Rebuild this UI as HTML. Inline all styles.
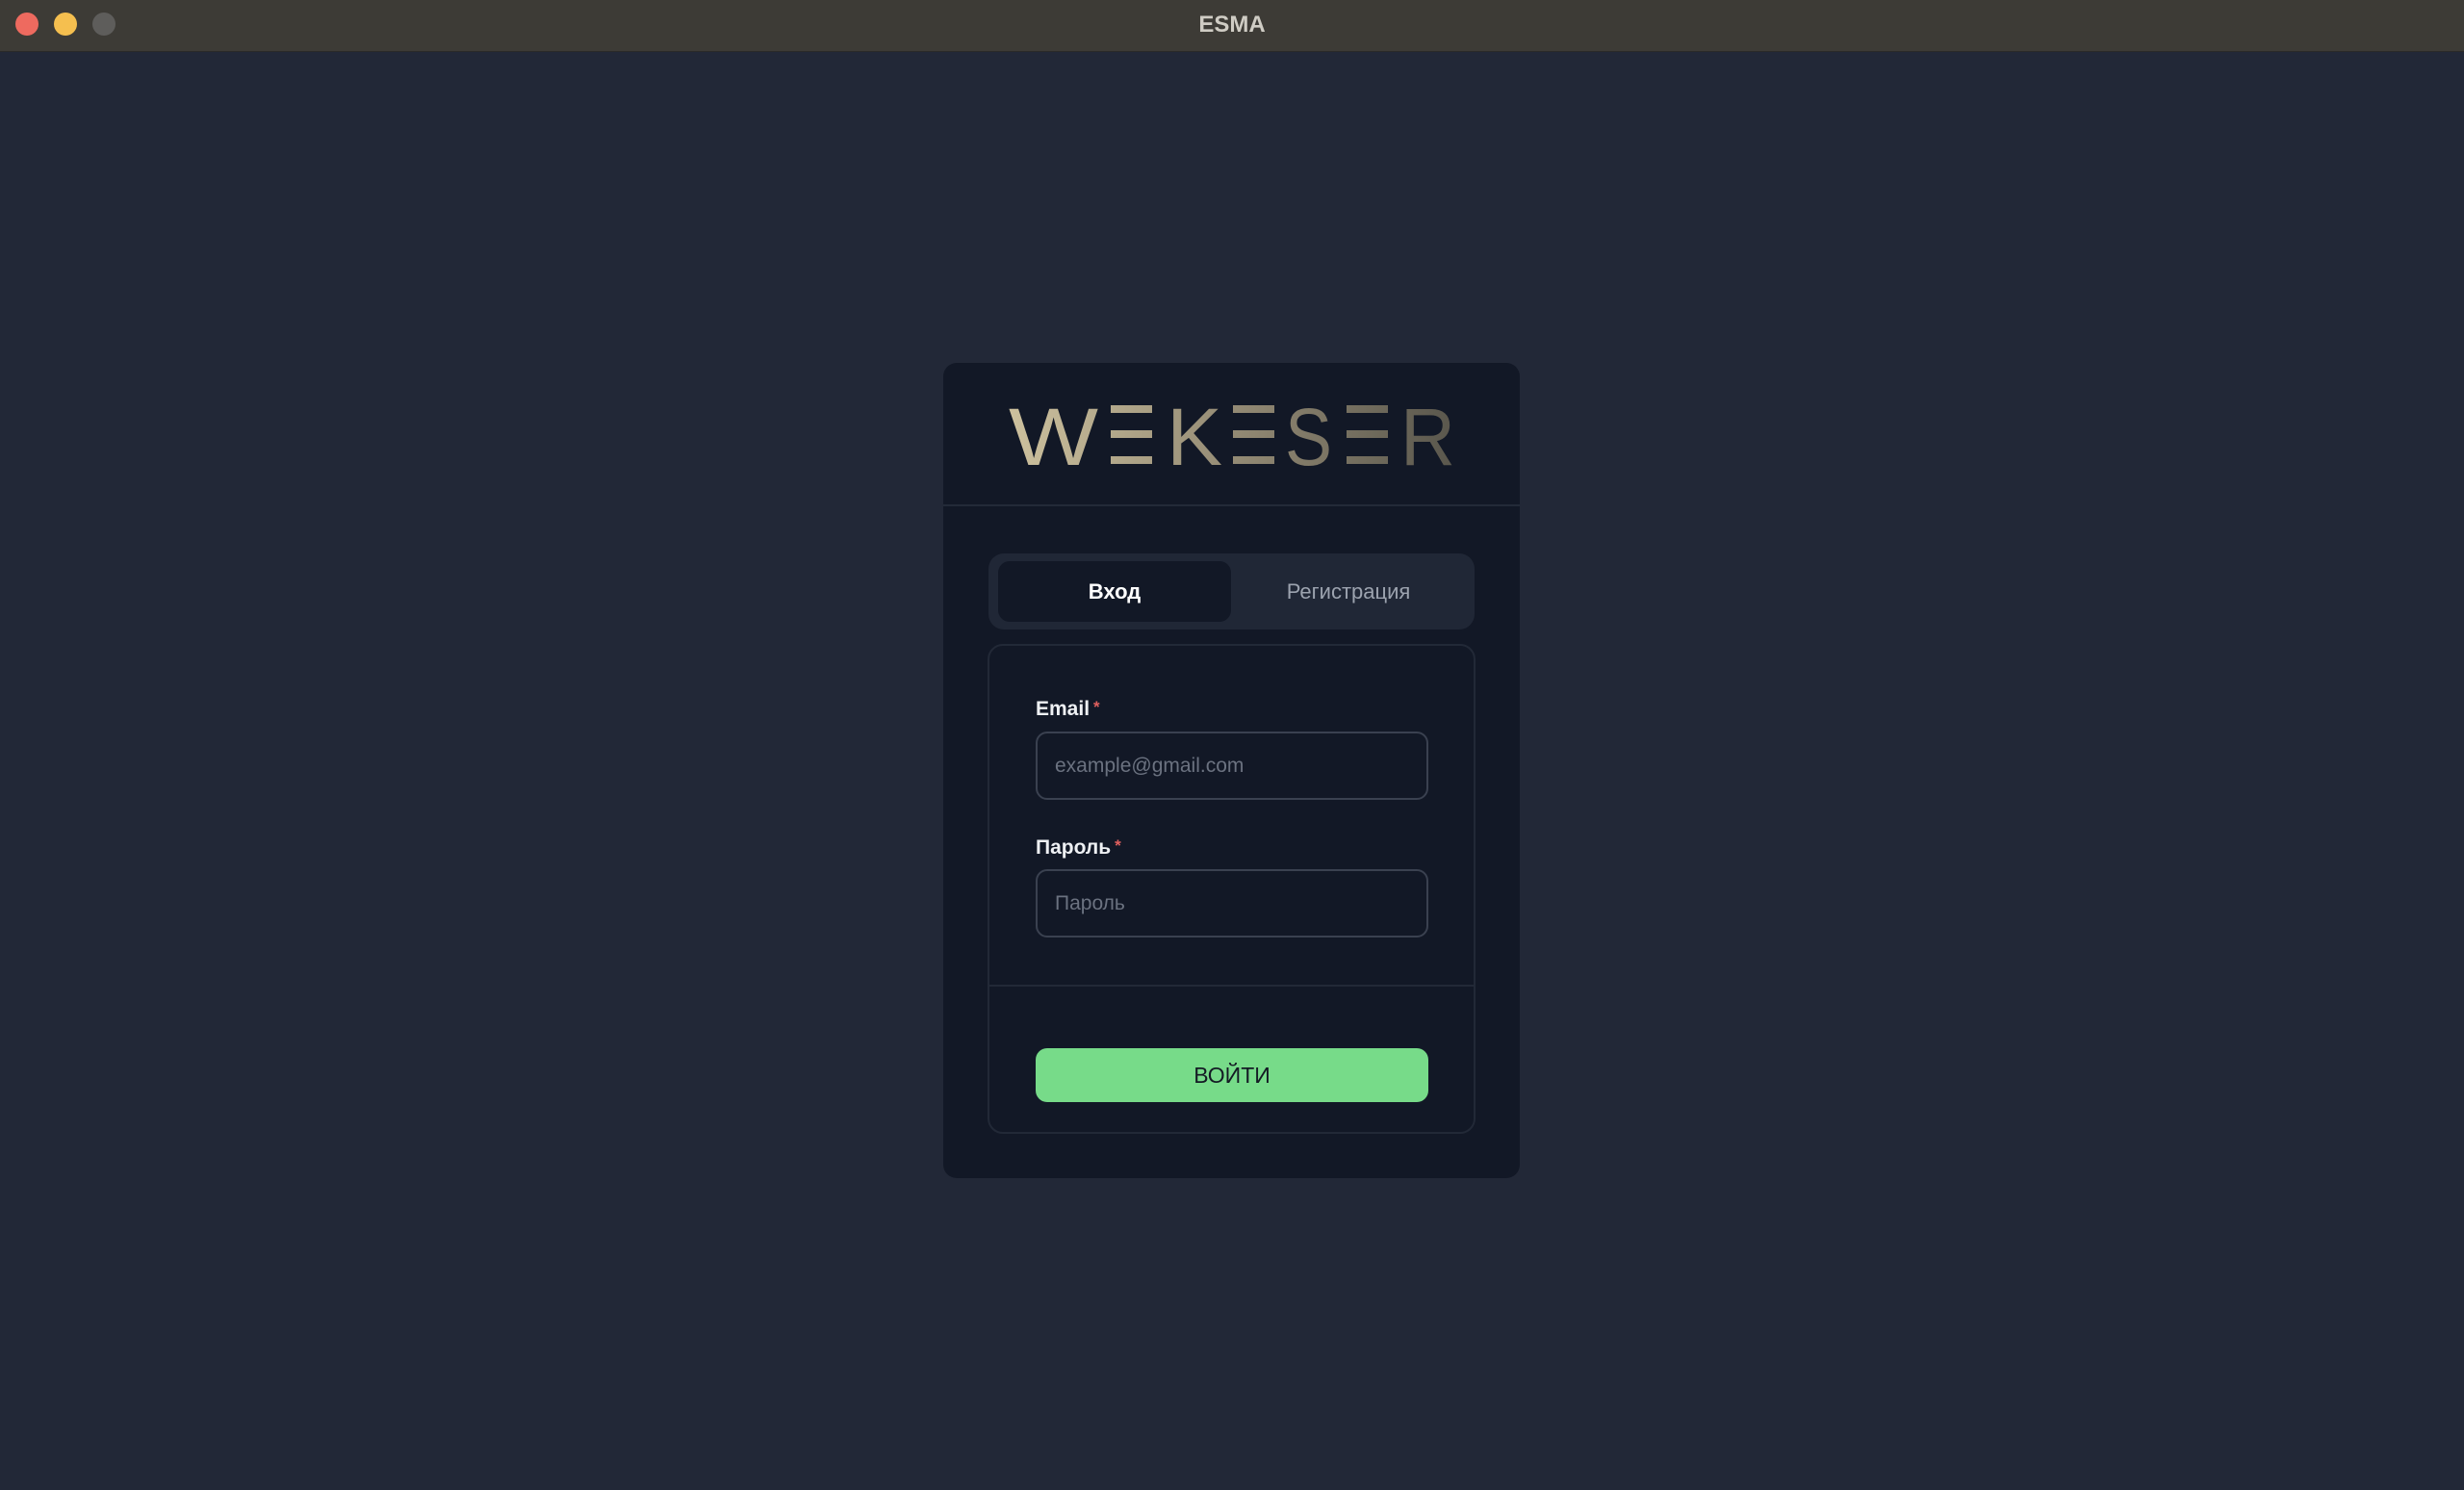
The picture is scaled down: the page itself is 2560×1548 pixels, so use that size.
<!DOCTYPE html>
<html><head><meta charset="utf-8"><style>
*{margin:0;padding:0;box-sizing:border-box}
html,body{width:2560px;height:1548px;overflow:hidden;background:#222837;font-family:"Liberation Sans","DejaVu Sans",sans-serif}
.tb{position:absolute;left:0;top:0;width:2560px;height:54px;background:#3d3b36;border-bottom:1px solid #2a2a28}
.tb .t{position:absolute;left:0;width:100%;top:12px;text-align:center;color:#cfccc4;font-weight:bold;font-size:24px}
.dot{position:absolute;top:13px;width:24px;height:24px;border-radius:50%}
.card{position:absolute;left:980px;top:377px;width:599px;height:847px;background:#121826;border-radius:14px}
.sep{position:absolute;left:980px;top:524px;width:599px;height:2px;background:#232a38}
.tabs{position:absolute;left:1027px;top:575px;width:505px;height:79px;background:#202736;border-radius:16px}
.tab{position:absolute;top:583px;height:63px;line-height:63px;text-align:center;font-size:22px}
.panel{position:absolute;left:1026px;top:669px;width:507px;height:509px;border:2px solid #222937;border-radius:16px}
.lbl{position:absolute;left:1076px;color:#eef0f3;font-size:21px;font-weight:bold}
.lbl span{color:#e0605e;font-size:17px;vertical-align:top;margin-left:4px}
.inp{position:absolute;left:1076px;width:408px;height:71px;border:2px solid #3a4150;border-radius:12px;color:#6b7280;font-size:21px;line-height:67px;padding-left:18px}
.div{position:absolute;left:1027px;top:1023px;width:505px;height:2px;background:#222937}
.btn{position:absolute;left:1076px;top:1089px;width:408px;height:56px;background:#77db89;border-radius:12px;text-align:center;line-height:56px;font-size:23px;color:#141a24}
</style></head><body>
<div class="tb"><div class="dot" style="left:16px;background:#ee6a5f"></div><div class="dot" style="left:56px;background:#f5bf4f"></div><div class="dot" style="left:96px;background:#5e5d5b"></div><div class="t">ESMA</div></div>
<div class="card"></div>
<svg style="position:absolute;left:0;top:0" width="2560" height="600">
<defs><linearGradient id="g" x1="1048" x2="1510" y1="0" y2="0" gradientUnits="userSpaceOnUse"><stop offset="0" stop-color="#cdc19e"/><stop offset="0.5" stop-color="#948b75"/><stop offset="1" stop-color="#5a574d"/></linearGradient></defs>
<g fill="url(#g)" font-family="Liberation Sans, sans-serif" font-size="84">
<text x="1048" y="483" textLength="93" lengthAdjust="spacingAndGlyphs">W</text>
<rect x="1154" y="421" width="43" height="8"/><rect x="1154" y="447" width="43" height="8"/><rect x="1154" y="474" width="43" height="8"/>
<text x="1212" y="483" textLength="58" lengthAdjust="spacingAndGlyphs">K</text>
<rect x="1281" y="421" width="43" height="8"/><rect x="1281" y="447" width="43" height="8"/><rect x="1281" y="474" width="43" height="8"/>
<text x="1335" y="483" textLength="49" lengthAdjust="spacingAndGlyphs">S</text>
<rect x="1399" y="421" width="43" height="8"/><rect x="1399" y="447" width="43" height="8"/><rect x="1399" y="474" width="43" height="8"/>
<text x="1455" y="483" textLength="57" lengthAdjust="spacingAndGlyphs">R</text>
</g></svg>
<div class="sep"></div>
<div class="tabs"></div>
<div class="tab" style="left:1037px;width:242px;background:#121826;border-radius:12px;color:#fff;font-weight:bold">Вход</div>
<div class="tab" style="left:1290px;width:222px;color:#9ca3af">Регистрация</div>
<div class="panel"></div>
<div class="lbl" style="top:725px">Email<span>*</span></div>
<div class="inp" style="top:760px">example@gmail.com</div>
<div class="lbl" style="top:869px">Пароль<span>*</span></div>
<div class="inp" style="top:903px">Пароль</div>
<div class="div"></div>
<div class="btn">ВОЙТИ</div>
</body></html>
